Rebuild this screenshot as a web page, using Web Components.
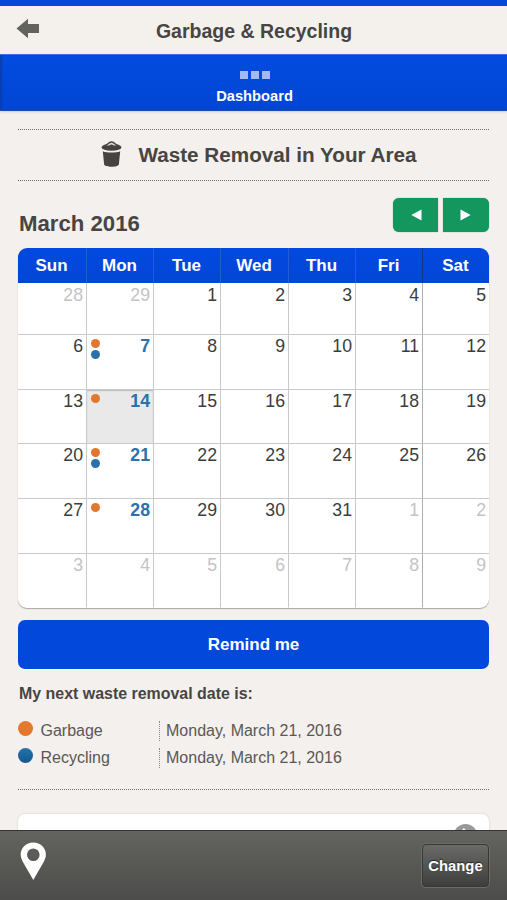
<!DOCTYPE html>
<html lang="en">
<head>
    <meta charset="UTF-8">
    <meta name="viewport" content="width=device-width, initial-scale=1.0">
    <title>Garbage &amp; Recycling</title>
    <style>
        html, body{height:100%}
        body{
            margin:0;
            display:flex;
            flex-direction:column;
            overflow:hidden;
            background:#f3f0ed;
            color:#474543;
            font-family:"Liberation Sans", Arial, sans-serif;
            --blue:#0249db;
            --line:#c9c9cb;
        }
        main{flex:1; min-height:0; overflow:hidden; padding:18px 18px 0}
    </style>
</head>
<body>
    <app-header>Garbage &amp; Recycling</app-header>
    <app-tab>Dashboard</app-tab>
    <main>
        <section-title>Waste Removal in Your Area</section-title>
        <month-bar>March 2016</month-bar>
        <month-calendar first="28" previous="29" days="31" today="14" garbage="7,14,21,28" recycling="7,21"></month-calendar>
        <wide-button>Remind me</wide-button>
        <next-dates>
            <span slot="title">My next waste removal date is:</span>
            <date-row kind="garbage">Garbage<span slot="date">Monday, March 21, 2016</span></date-row>
            <date-row kind="recycling">Recycling<span slot="date">Monday, March 21, 2016</span></date-row>
        </next-dates>
        <info-card></info-card>
    </main>
    <app-footer>Change</app-footer>

    <script type="text/javascript">
        // registers an element whose shadow root is filled with static markup
        function define(name, html) {
            const template = document.createElement("template")
            template.innerHTML = html
            window.customElements.define(name, class extends HTMLElement {
                connectedCallback() {
                    if(this.shadowRoot) return
                    this.attachShadow({mode:"open"}).appendChild(template.content.cloneNode(true))
                }
            })
        }

        define("app-header", `
            <style>
                :host{display:grid; grid-template-columns:50px 1fr 50px; align-items:center; height:48px; border-top:6px solid var(--blue); background:#f4f1ed; flex:none}
                svg{display:block; margin:-3px 0 0 16px}
                h1{margin:0; padding:1px 0 0 1px; text-align:center; font-size:19.5px; line-height:24px}
            </style>
            <svg width="24" height="21" viewBox="0 0 24 21"><path d="M.5 10.500 12 .7V6h11v9H12v5.300z" fill="#62625e"/></svg>
            <h1><slot></slot></h1>
        `)

        define("app-tab", `
            <style>
                :host{display:flex; flex-direction:column; align-items:center; box-sizing:border-box; height:57px; padding:16px 0 0 2px; flex:none;
                    background:linear-gradient(#024cdf, #0145d3); color:#fff; font-size:14.7px; font-weight:bold; line-height:18px;
                    border-top:1px solid #3a70df; border-bottom:1px solid #1a4fb5; box-shadow:inset 3px 0 2px -1px #0a3fae, 0 1px 2px #c9ccd8}
                .dots{display:flex; gap:3px; margin-bottom:8px}
                i{width:8px; height:8px; background:#a3b9ef}
            </style>
            <div class="dots"><i></i><i></i><i></i></div>
            <div><slot></slot></div>
        `)

        define("section-title", `
            <style>
                :host{display:flex; justify-content:center; align-items:center; height:50px; padding-left:11px; gap:16px; border-top:1px dotted #6e6c69; border-bottom:1px dotted #6e6c69}
                svg{margin-top:-3px}
                h2{margin:0; font-size:20.7px; line-height:24px}
            </style>
            <svg width="21" height="26" viewBox="0 0 21 26">
                <g fill="#454441">
                    <ellipse cx="10.500" cy="6.200" rx="10" ry="3.600"/>
                    <path d="M1.800 10.300c2.300 1 5.300 1.300 8.700 1.300s6.400-.3 8.700-1.300l-1.300 12.900c-.2 1.600-3.200 2.500-7.400 2.500s-7.200-.9-7.400-2.500z"/>
                </g>
                <path d="M4.600 4.600C6.600 3.800 7.600 1 10.500 1s3.900 2.800 5.900 3.600" fill="#dcd9d5" stroke="#454441" stroke-width="1.300"/>
                <path d="M7.300 5.600c1-.3 1.700-2 3.200-2s2.200 1.700 3.200 2z" fill="#454441"/>
            </svg>
            <h2><slot></slot></h2>
        `)

        define("month-bar", `
            <style>
                :host{display:flex; justify-content:space-between; align-items:flex-start; height:50px; padding-top:17px}
                h2{margin:13px 0 0 1px; font-size:22.2px; line-height:26px}
                nav{display:flex; gap:5px}
                button{display:grid; place-items:center; width:45px; height:34px; padding:0 0 0 2px; border:0; background:#14965f; border-radius:6px 0 0 6px; box-shadow:0 0 1px #14965f}
                button + button{width:46px; padding:0 2px 0 0; border-radius:0 6px 6px 0}
            </style>
            <h2><slot></slot></h2>
            <nav>
                <button><svg width="11" height="12" viewBox="0 0 11 12"><path d="M.3 6 10.500.500v11z" fill="#fff"/></svg></button>
                <button><svg width="11" height="12" viewBox="0 0 11 12"><path d="M10.700 6 .5.500v11z" fill="#fff"/></svg></button>
            </nav>
        `)

        define("wide-button", `
            <style>
                :host{display:block; margin-top:12px}
                button{display:block; width:100%; height:49px; padding:1px 0 0; border:0; border-radius:7px; background:var(--blue); color:#fff; font:bold 17px "Liberation Sans", Arial, sans-serif; box-shadow:0 1px 0 #fff}
            </style>
            <button><slot></slot></button>
        `)

        define("next-dates", `
            <style>
                :host{display:flex; flex-direction:column; height:120px; border-bottom:1px dotted #6e6c69}
                h3{margin:15px 0 15px 1px; font-size:15.95px; line-height:20px}
            </style>
            <h3><slot name="title"></slot></h3>
            <slot></slot>
        `)

        define("date-row", `
            <style>
                :host{display:grid; grid-template-columns:22.5px 118px 1fr; align-items:center; height:27px; font-size:16px; line-height:20px; color:#5a5856}
                i{width:15px; height:15px; margin-top:-9px; border-radius:50%; background:linear-gradient(#e67a33, #e27528)}
                :host([kind=recycling]) i{background:linear-gradient(#2273ad, #17588f)}
                .date{padding-left:6.5px; margin-top:-4px; border-left:1px dotted #8a8886; line-height:20px}
                .name{margin-top:-4px}
            </style>
            <i></i>
            <div class="name"><slot></slot></div>
            <div class="date"><slot name="date"></slot></div>
        `)

        define("info-card", `
            <style>
                :host{display:flex; justify-content:flex-end; box-sizing:border-box; height:60px; margin-top:24px; padding:10px 11px 0; background:#fff; border-radius:7px; box-shadow:0 0 2px #c9c5c2}
            </style>
            <svg width="25" height="25" viewBox="0 0 25 25">
                <circle cx="12.500" cy="12" r="12" fill="#97989a"/>
                <path d="M10 5l7 7-7 7" fill="none" stroke="#fff" stroke-width="2.500"/>
            </svg>
        `)

        define("app-footer", `
            <style>
                :host{display:flex; justify-content:space-between; align-items:flex-start; box-sizing:border-box; height:70px; padding:11px 18px 0 20px; border-top:1px solid #343434; flex:none; background:linear-gradient(#63635f, #4c4c4a)}
                svg{display:block}
                button{width:67px; height:43px; margin-top:2px; padding:1px 0 0; border:1px solid #383836; border-radius:4px; background:linear-gradient(#6a6a68, #3e3e3c); color:#fff;
                    font:bold 14.8px "Liberation Sans", Arial, sans-serif; box-shadow:0 0 0 1px #6b6b68; text-shadow:0 -1px 1px #222}
            </style>
            <svg width="27" height="38" viewBox="0 0 27 38"><path fill="#fff" fill-rule="evenodd" d="M13.300.500C6.200.500.700 6 .700 12.500c0 3 1.100 5.300 2.500 8L13.300 38l10.100-17.500c1.400-2.700 2.500-5 2.500-8C25.900 6 20.400.500 13.300.500zm0 6a6.300 6.300 0 1 1 0 12.600 6.300 6.300 0 0 1 0-12.600z"/></svg>
            <button><slot></slot></button>
        `)

        window.customElements.define("month-calendar", class extends HTMLElement {
            list(name) {return (this.getAttribute(name) ?? "").split(",").map(Number)}
            number(name) {return parseInt(this.getAttribute(name))}
            connectedCallback() {
                this.attachShadow({mode:"open"}).innerHTML = `
                    <style>
                        :host{display:grid; grid-template-columns:69px 67px 67px 68px 67px 67px 1fr; grid-template-rows:35px 52px 55px 54px 55px 55px 54px;
                            overflow:hidden; background:#fff; border-radius:9px; box-shadow:0 1px 1px #a9a7a5}
                        .head{padding-right:1px; background:linear-gradient(#0249e0, #0246d6); color:#fff; font-size:17px; font-weight:bold; line-height:36px; text-align:center; border-right:1px solid #265dcc}
                        .head:nth-of-type(6){border-color:#0b3590}
                        .day{display:flex; justify-content:space-between; align-items:flex-start; padding:1px 3px 0 4px; border-right:1px solid var(--line); border-bottom:1px solid var(--line); font-size:17.7px; line-height:21px; color:#3c3c3c}
                        .day:nth-of-type(-n + 14){padding-top:2px}
                        .day:nth-of-type(7n + 6){border-right-color:#aeaeb0}
                        .head:nth-of-type(7n), .day:nth-of-type(7n){border-right:0}
                        .day:nth-of-type(n + 43){border-bottom-color:transparent}
                        .other{color:#c3c3c5}
                        .pickup{color:#2c70ad; font-weight:bold}
                        .today{background:#e9e9e9; box-shadow:inset 0 1px 1px #bbb}
                        .marks{display:grid; gap:2px; padding-top:3px}
                        i{width:9px; height:9px; border-radius:50%; background:#2c70a9}
                        i.garbage{background:#e0792f}
                    </style>
                    ${["Sun", "Mon", "Tue", "Wed", "Thu", "Fri", "Sat"].map(d => `<div class="head">${d}</div>`).join("")}
                    ${this.renderDays()}
                `
            }
            renderDays() {
                const garbage = this.list("garbage")
                const recycling = this.list("recycling")
                const days = this.number("days")
                // day number just before the first cell, counted from day 1 of the month
                const start = this.number("first") - this.number("previous") - 1
                let html = ""
                for(let n = start + 1; n <= start + 42; n++) {
                    const inside = n > 0 && n <= days
                    const label = n < 1 ? n + this.number("previous") : n > days ? n - days : n
                    const g = inside && garbage.includes(n)
                    const r = inside && recycling.includes(n)
                    const names = ["day", inside ? "" : "other", g || r ? "pickup" : "", n == this.number("today") ? "today" : ""]
                    html += `<div class="${names.join(" ")}"><div class="marks">${g ? "<i class=garbage></i>" : ""}${r ? "<i></i>" : ""}</div><span>${label}</span></div>`
                }
                return html
            }
        })
    </script>
</body>
</html>
